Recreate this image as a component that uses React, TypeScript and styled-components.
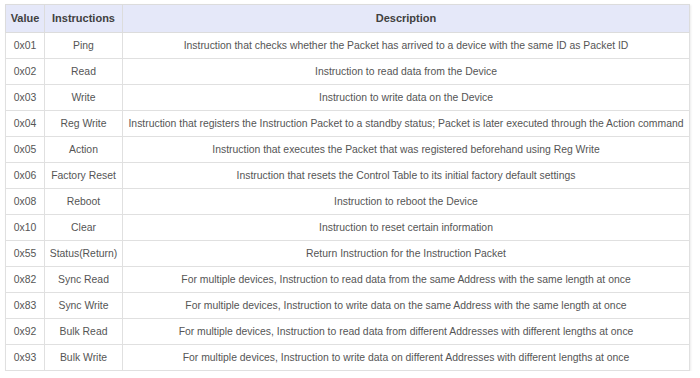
import styled, { createGlobalStyle } from 'styled-components';

const GlobalStyle = createGlobalStyle`
  html, body {
    margin: 0;
    background: #ffffff;
  }
  body {
    font-family: "Liberation Sans", Arial, sans-serif;
  }
`;

type Row = { value: string; name: string; desc: string };

const rows: Row[] = [
  { value: '0x01', name: 'Ping', desc: 'Instruction that checks whether the Packet has arrived to a device with the same ID as Packet ID' },
  { value: '0x02', name: 'Read', desc: 'Instruction to read data from the Device' },
  { value: '0x03', name: 'Write', desc: 'Instruction to write data on the Device' },
  { value: '0x04', name: 'Reg Write', desc: 'Instruction that registers the Instruction Packet to a standby status; Packet is later executed through the Action command' },
  { value: '0x05', name: 'Action', desc: 'Instruction that executes the Packet that was registered beforehand using Reg Write' },
  { value: '0x06', name: 'Factory Reset', desc: 'Instruction that resets the Control Table to its initial factory default settings' },
  { value: '0x08', name: 'Reboot', desc: 'Instruction to reboot the Device' },
  { value: '0x10', name: 'Clear', desc: 'Instruction to reset certain information' },
  { value: '0x55', name: 'Status(Return)', desc: 'Return Instruction for the Instruction Packet' },
  { value: '0x82', name: 'Sync Read', desc: 'For multiple devices, Instruction to read data from the same Address with the same length at once' },
  { value: '0x83', name: 'Sync Write', desc: 'For multiple devices, Instruction to write data on the same Address with the same length at once' },
  { value: '0x92', name: 'Bulk Read', desc: 'For multiple devices, Instruction to read data from different Addresses with different lengths at once' },
  { value: '0x93', name: 'Bulk Write', desc: 'For multiple devices, Instruction to write data on different Addresses with different lengths at once' },
];

export default function App() {
  return (
    <>
      <GlobalStyle />
      <Page>
        <Table>
          <colgroup>
            <col style={{ width: 39 }} />
            <col style={{ width: 78 }} />
            <col />
          </colgroup>
          <thead>
            <tr>
              <Th>Value</Th>
              <Th>Instructions</Th>
              <Th>Description</Th>
            </tr>
          </thead>
          <tbody>
            {rows.map((r) => (
              <tr key={r.value}>
                <Td>{r.value}</Td>
                <Td>{r.name}</Td>
                <Td>{r.desc}</Td>
              </tr>
            ))}
          </tbody>
        </Table>
      </Page>
    </>
  );
}

const Page = styled.div`
  padding: 4px 0 0 5px;
`;

const Table = styled.table`
  width: 685px;
  border-collapse: collapse;
  table-layout: fixed;
  border: 1px solid #dcdcdc;
  box-shadow: 1px 1px 2px rgba(0, 0, 0, 0.08);
`;

const Th = styled.th`
  height: 25px;
  padding: 0 2px 2px;
  background: #e5e8f9;
  border: 1px solid #dcdcdc;
  font-size: 11px;
  font-weight: bold;
  color: #404040;
  text-align: center;
  white-space: nowrap;
`;

const Td = styled.td`
  height: 25px;
  padding: 0 2px;
  border: 1px solid #e0e0e0;
  font-size: 10.4px;
  color: #555555;
  text-align: center;
  white-space: nowrap;
`;
